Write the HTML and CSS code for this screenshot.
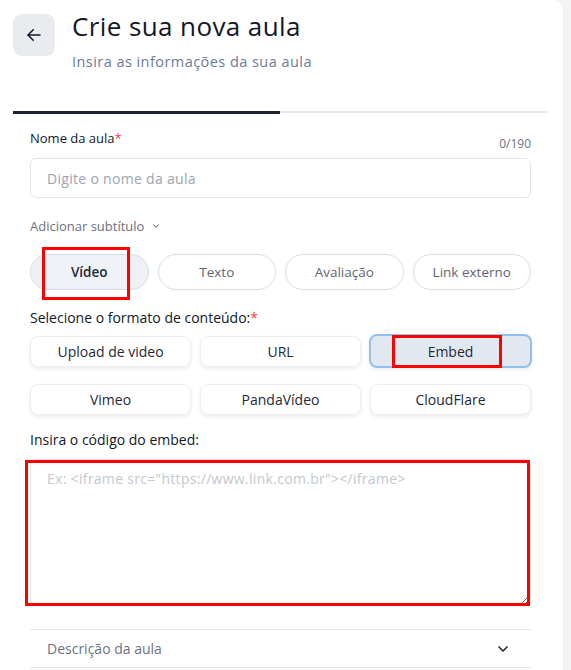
FILE: index.html
```html
<!DOCTYPE html>
<html lang="pt-BR">
<head>
  <meta charset="UTF-8" />
  <meta name="viewport" content="width=device-width, initial-scale=1.0"/>
  <title>Crie sua nova aula</title>
  <link rel="stylesheet" href="styles.css">
</head>
<body>
  <div class="card">
    <div class="header">
      <button class="back-btn" type="button" aria-label="Voltar">
        <svg width="18" height="18" viewBox="0 0 24 24" fill="none" stroke="#111827" stroke-width="2" stroke-linecap="round" stroke-linejoin="round">
          <path d="M20 12H4"/>
          <path d="M11 5l-7 7 7 7"/>
        </svg>
      </button>
      <div class="titles">
        <h1>Crie sua nova aula</h1>
        <p class="subtitle">Insira as informações da sua aula</p>
      </div>
    </div>

    <div class="tabs">
      <span class="tab active"></span>
      <span class="tab"></span>
    </div>

    <div class="form">
      <div class="label-row">
        <label class="label">Nome da aula<span class="req">*</span></label>
        <span class="counter">0/190</span>
      </div>
      <input class="text-input" type="text" placeholder="Digite o nome da aula" />

      <button class="subtitle-toggle" type="button">
        Adicionar subtítulo
        <svg width="10" height="10" viewBox="0 0 24 24" fill="none" stroke="#6b7280" stroke-width="2.5" stroke-linecap="round" stroke-linejoin="round"><path d="M6 9l6 6 6-6"/></svg>
      </button>

      <div class="pills">
        <button class="pill active" type="button">Vídeo</button>
        <button class="pill" type="button">Texto</button>
        <button class="pill" type="button">Avaliação</button>
        <button class="pill" type="button">Link externo</button>
      </div>

      <p class="label section-label">Selecione o formato de conteúdo:<span class="req">*</span></p>
      <div class="formats">
        <button class="format" type="button">Upload de video</button>
        <button class="format" type="button">URL</button>
        <button class="format active" type="button">Embed</button>
        <button class="format" type="button">Vimeo</button>
        <button class="format" type="button">PandaVídeo</button>
        <button class="format" type="button">CloudFlare</button>
      </div>

      <p class="label embed-label">Insira o código do embed:</p>
      <textarea class="embed-input" placeholder='Ex: <iframe src="https://www.link.com.br"></iframe>'></textarea>

      <div class="collapse">
        <span>Descrição da aula</span>
        <svg width="16" height="16" viewBox="0 0 24 24" fill="none" stroke="#1f2937" stroke-width="2.5" stroke-linecap="round" stroke-linejoin="round"><path d="M6 9l6 6 6-6"/></svg>
      </div>
    </div>

    <span class="mark mark-video"></span>
    <span class="mark mark-embed"></span>
    <span class="mark mark-textarea"></span>
  </div>
</body>
</html>
```

FILE: styles.css
```css
/* Reset & Base */
* {
  box-sizing: border-box;
  margin: 0;
  padding: 0;
}

body {
  font-family: 'Open Sans', 'Liberation Sans', sans-serif;
  background-color: #f3f3f4;
  color: #111827;
  height: 670px;
  overflow: hidden;
}

button, input, textarea {
  font-family: inherit;
}

/* Card */
.card {
  position: relative;
  width: 563px;
  min-height: 700px;
  background: #fff;
  border-top-right-radius: 10px;
  padding: 14px 16px 0 13px;
}

/* Header */
.header {
  display: flex;
  gap: 17px;
}

.back-btn {
  width: 42px;
  height: 42px;
  border: none;
  border-radius: 9px;
  background-color: #e9ebee;
  display: flex;
  align-items: center;
  justify-content: center;
  cursor: pointer;
}

h1 {
  margin-top: -3px;
  font-size: 26px;
  font-weight: 400;
  line-height: 30px;
  letter-spacing: 0.4px;
  color: #111827;
}

.subtitle {
  margin-top: 11px;
  font-size: 14.5px;
  letter-spacing: 0.45px;
  color: #6b7a99;
}

/* Tabs */
.tabs {
  display: flex;
  margin-top: 40px;
}

.tab {
  flex: 1;
  height: 2px;
  background-color: #e5e7eb;
}

.tab.active {
  height: 3px;
  background-color: #1e2330;
}

/* Form */
.form {
  padding: 0 16px 0 17px;
}

.label-row {
  display: flex;
  justify-content: space-between;
  align-items: flex-start;
  margin-top: 15px;
}

.label {
  font-size: 13px;
  color: #111827;
}

.req {
  color: #ef4444;
}

.counter {
  margin-top: 6px;
  font-size: 12px;
  color: #6b7280;
}

.text-input {
  width: 100%;
  height: 40px;
  margin-top: 6px;
  padding: 0 16px;
  font-size: 14px;
  border: 1px solid #e2e5ea;
  border-radius: 6px;
  outline: none;
}

.text-input::placeholder {
  color: #9ca3af;
  letter-spacing: 0.3px;
}

.subtitle-toggle {
  display: flex;
  align-items: center;
  gap: 7px;
  margin-top: 19px;
  border: none;
  background: none;
  font-size: 13px;
  color: #6b7280;
  cursor: pointer;
}

/* Lesson type pills */
.pills {
  display: grid;
  grid-template-columns: repeat(4, 1fr);
  gap: 9px;
  margin-top: 19px;
}

.pill {
  height: 36px;
  border: 1px solid #d6dce5;
  border-radius: 18px;
  background: #fff;
  font-size: 13.5px;
  color: #5f6570;
  cursor: pointer;
}

.pill.active {
  background-color: #eef2f7;
  font-weight: 600;
  color: #1f2937;
}

.section-label {
  margin-top: 18px;
  font-size: 14px;
}

/* Content format grid */
.formats {
  display: grid;
  grid-template-columns: repeat(3, 1fr);
  gap: 17px 9px;
  margin-top: 9px;
}

.format {
  height: 31px;
  border: 1px solid #eceef2;
  border-radius: 8px;
  background: #fff;
  box-shadow: 0 2px 4px rgba(15, 23, 42, 0.08);
  font-size: 14px;
  color: #1f2937;
  cursor: pointer;
}

.format.active {
  border: 2px solid #90c0ee;
  background-color: #e2e8f0;
  height: 34px;
  margin: -2px -1px -1px;
}

.embed-label {
  margin-top: 15px;
  font-size: 14px;
}

.embed-input {
  display: block;
  width: 100%;
  height: 146px;
  margin-top: 10px;
  padding: 9px 16px;
  font-size: 14px;
  border: 1px solid #e2e5ea;
  border-radius: 6px;
  resize: vertical;
  outline: none;
}

.embed-input::placeholder {
  color: #c4c7cd;
  letter-spacing: 0.3px;
}

/* Collapsible section */
.collapse {
  display: flex;
  justify-content: space-between;
  align-items: center;
  margin-top: 24px;
  padding: 0 20px 0 17px;
  height: 39px;
  border-top: 1px solid #e5e7eb;
  border-bottom: 1px solid #e5e7eb;
  font-size: 14px;
  color: #6b7280;
}

/* Red annotation boxes */
.mark {
  position: absolute;
  border: 3px solid #ff0000;
  pointer-events: none;
}

.mark-video {
  left: 42px;
  top: 247px;
  width: 88px;
  height: 53px;
}

.mark-embed {
  left: 392px;
  top: 335px;
  width: 110px;
  height: 33px;
}

.mark-textarea {
  left: 25px;
  top: 460px;
  width: 505px;
  height: 146px;
}
```
